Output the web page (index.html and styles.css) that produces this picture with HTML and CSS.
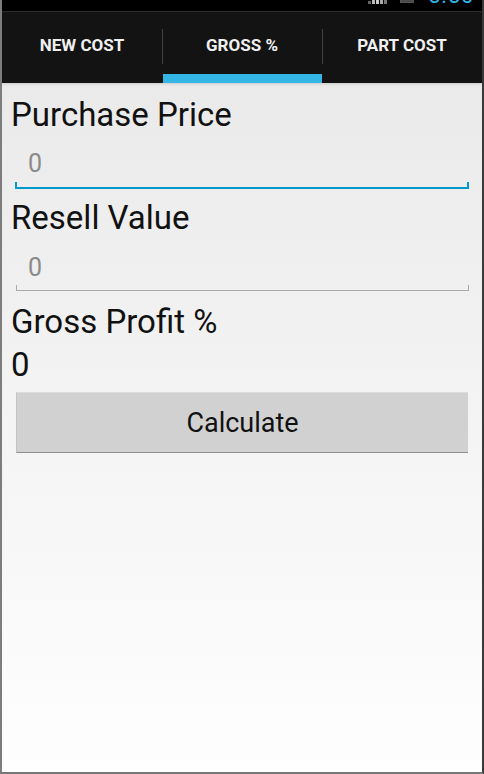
FILE: index.html
```html
<!DOCTYPE html>
<html>
<head>
<meta charset="utf-8">
<link rel="stylesheet" href="styles.css">
</head>
<body>
<div class="frame">
  <div class="status">
    <div class="status-icons">
      <svg class="signal" width="20" height="4" viewBox="0 0 20 4">
        <rect x="0" y="1" width="3" height="3" fill="#666"/>
        <rect x="4" y="0" width="3" height="4" fill="#bbb"/>
        <rect x="8" y="0" width="3" height="4" fill="#ccc"/>
        <rect x="12" y="0" width="3" height="4" fill="#aaa"/>
        <rect x="16" y="0" width="3" height="4" fill="#777"/>
      </svg>
      <svg class="battery" width="14" height="3" viewBox="0 0 14 3">
        <rect x="0" y="0" width="14" height="3" fill="#555"/>
        <rect x="1" y="0" width="12" height="2" fill="#4a4a4a"/>
      </svg>
      <div class="clock">5:50</div>
    </div>
  </div>
  <div class="tabs">
    <div class="tab">NEW COST</div>
    <div class="tab sep">GROSS %</div>
    <div class="tab sep">PART COST</div>
  </div>
  <div class="indicator-row">
    <div class="ind"></div>
    <div class="ind active"></div>
    <div class="ind"></div>
  </div>
  <div class="content">
    <div class="label first">Purchase Price</div>
    <div class="edit">
      <div class="edit-text">0</div>
      <div class="underline focused"></div>
    </div>
    <div class="label second">Resell Value</div>
    <div class="edit">
      <div class="edit-text two">0</div>
      <div class="underline"></div>
    </div>
    <div class="label third">Gross Profit %</div>
    <div class="label result">0</div>
    <div class="button">Calculate</div>
  </div>
</div>
</body>
</html>
```

FILE: styles.css
```css
html, body {
  margin: 0;
  padding: 0;
  background: #3a3a3a;
}
body {
  font-family: Roboto, "Noto Sans", "Liberation Sans", sans-serif;
  width: 484px;
  height: 774px;
  overflow: hidden;
}
.frame {
  width: 484px;
  height: 774px;
  box-sizing: border-box;
  border-left: 2px solid #7d7d7d;
  border-right: 2px solid #3a3a3a;
  border-bottom: 2px solid #777;
  display: flex;
  flex-direction: column;
}
.status {
  height: 11px;
  background: #000;
  border-bottom: 1px solid #2c2c2c;
  overflow: hidden;
  display: flex;
  justify-content: flex-end;
}
.status-icons {
  display: flex;
  align-items: flex-start;
  padding-right: 14px;
}
.signal { margin-right: 12px; }
.battery { margin-right: 14px; }
.clock {
  color: #33b5e5;
  font-size: 22px;
  line-height: 22px;
  margin-top: -15px;
  width: 40px;
  letter-spacing: 1px;
}
.tabs {
  background: #131313;
  height: 62px;
  display: flex;
}
.tab {
  flex: 1;
  display: flex;
  align-items: center;
  justify-content: center;
  color: #f0f0f0;
  font-weight: bold;
  font-size: 17px;
  padding-top: 3px;
  position: relative;
}
.sep::before {
  content: "";
  position: absolute;
  left: 0;
  top: 17px;
  height: 35px;
  width: 1px;
  background: #444;
}
.indicator-row {
  background: #131313;
  height: 9px;
  display: flex;
}
.ind { flex: 1; }
.ind.active {
  background: #33b5e5;
  margin-left: 1px;
}
.content {
  flex: 1;
  background: linear-gradient(#eaeaea 0%, #f2f2f2 40%, #f8f8f8 70%, #fefefe 100%);
  box-shadow: inset 0 3px 3px -2px #c8c8c8;
  padding: 14px 13px 0 9px;
  display: flex;
  flex-direction: column;
}
.label {
  font-size: 33px;
  line-height: 36px;
  color: #111;
}
.edit {
  margin-left: 4px;
}
.edit-text {
  color: #8a8a8a;
  font-size: 25px;
  line-height: 30px;
  padding: 16px 0 3px 13px;
}
.edit-text.two {
  padding-top: 17px;
  padding-bottom: 2px;
}
.underline {
  height: 5px;
  margin-left: 1px;
  border: 1px solid #aaa;
  border-top: none;
}
.underline.focused {
  height: 5px;
  margin-left: 0;
  border: 2px solid #0099cc;
  border-top: none;
}
.label.second { margin-top: 11px; }
.label.third { margin-top: 13px; }
.label.result { margin-top: 7px; }
.button {
  margin: 9px 1px 0 5px;
  height: 59px;
  background: #d1d1d1;
  border-top: 1px solid #dcdcdc;
  border-left: 1px solid #c4c4c4;
  border-bottom: 1px solid #8e8e8e;
  box-sizing: content-box;
  display: flex;
  align-items: center;
  justify-content: center;
  font-size: 27px;
  color: #111;
}
```
